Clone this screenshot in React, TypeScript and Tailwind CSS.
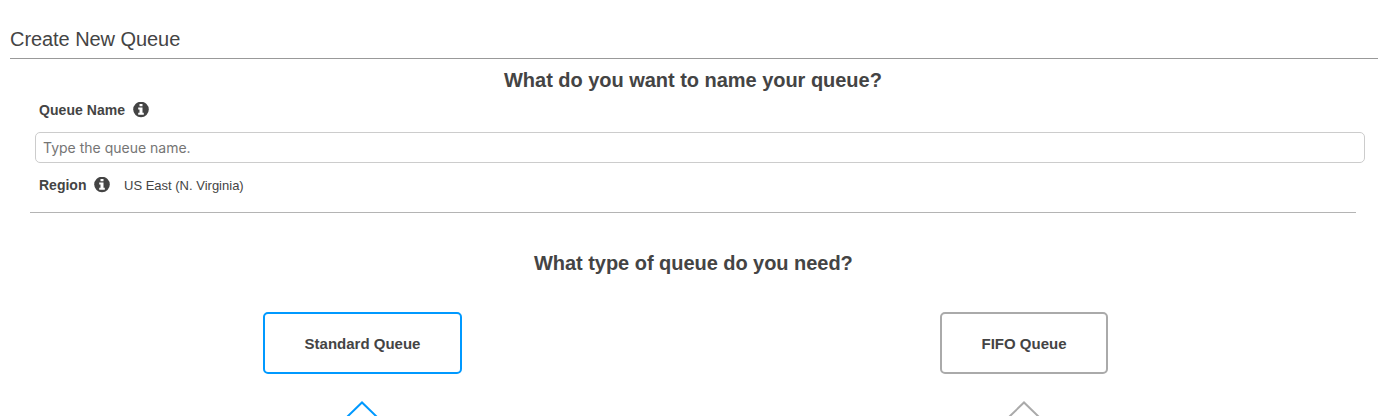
import React from "react";

function InfoIcon() {
  return (
    <svg className="size-4 shrink-0" viewBox="0 0 16 16" aria-hidden="true">
      <circle cx="8" cy="7.5" r="7.8" fill="#444" />
      <path fill="#fff" d="M6.5 2h3v2.3h-3zM5.2 5.6h4.3v5.2h1.3v2H5.2v-2h1.3V7.6H5.2z" />
    </svg>
  );
}

function Pointer({ color }: { color: string }) {
  return (
    <svg className="mt-[27px] h-[15px] w-[32px] shrink-0" viewBox="0 0 32 15" aria-hidden="true">
      <path d="M1 16 16 1.5 31 16" fill="none" stroke={color} strokeWidth="2" />
    </svg>
  );
}

export default function App() {
  return (
    <main className="flex h-[416px] w-[1392px] flex-col overflow-hidden bg-white font-['Liberation_Sans',Arial,sans-serif] text-[#444]">
      <header className="mr-[14px] ml-[10px] h-[59px] border-b border-[#999] pt-[26px]">
        <h1 className="text-[20px] leading-[26px] tracking-[-0.06px] whitespace-nowrap">Create New Queue</h1>
      </header>
      <section className="flex flex-col">
        <h2 className="mt-[7px] ml-[504px] h-[28px] text-[20px] leading-[28px] font-bold tracking-[-0.03px] whitespace-nowrap">What do you want to name your queue?</h2>
        <div className="mt-[6px] ml-[39px] flex h-[20px] items-center">
          <label htmlFor="name" className="w-[94px] text-[14px] font-bold tracking-[0.06px]">Queue Name</label>
          <InfoIcon />
        </div>
        <input id="name" placeholder="Type the queue name." className="mt-[12px] ml-[35px] h-[31px] w-[1330px] rounded-[5px] border border-[#ccc] px-[7px] font-[Inter,sans-serif] text-[14px] placeholder:text-[#757575]" />
        <div className="mt-[12px] ml-[39px] flex h-[20px] items-center">
          <span className="w-[55px] text-[14px] font-bold">Region</span>
          <InfoIcon />
          <span className="ml-[14px] pt-px text-[13px] leading-[19px]">US East (N. Virginia)</span>
        </div>
      </section>
      <section className="mt-[17px] mr-[36px] ml-[30px] border-t border-[#b4b4b4]">
        <h2 className="mt-[36px] ml-[504px] h-[28px] text-[20px] leading-[28px] font-bold tracking-[-0.04px] whitespace-nowrap">What type of queue do you need?</h2>
        <div className="mt-[35px] flex">
          <div className="ml-[233px] flex w-[199px] flex-col items-start">
            <button className="h-[62px] w-full rounded-[5px] border-2 border-[#0099ff] pt-[2px] text-[15px] font-bold">Standard Queue</button>
            <div className="ml-[83px]"><Pointer color="#0099ff" /></div>
          </div>
          <div className="ml-[478px] flex w-[168px] flex-col items-center">
            <button className="h-[62px] w-full rounded-[5px] border-2 border-[#aaa] pt-[2px] text-[15px] font-bold">FIFO Queue</button>
            <Pointer color="#aaaaaa" />
          </div>
        </div>
      </section>
    </main>
  );
}
